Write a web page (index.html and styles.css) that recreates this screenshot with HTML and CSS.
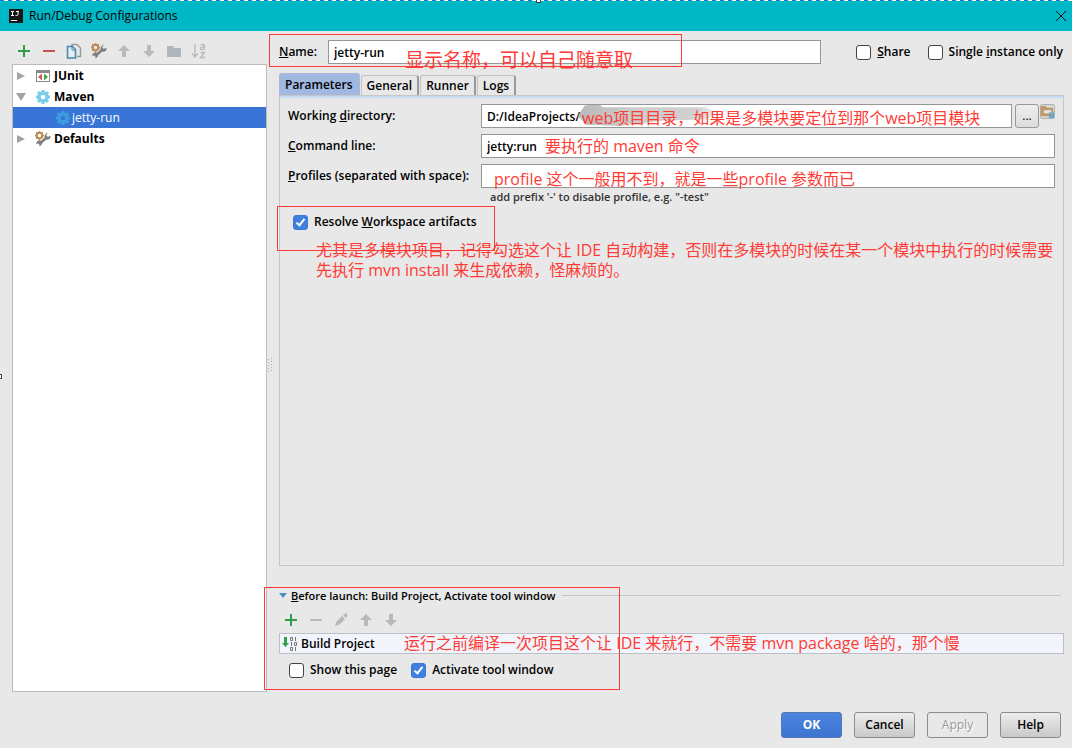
FILE: index.html
```html
<!DOCTYPE html>
<html lang="zh-CN">
<head>
<meta charset="utf-8">
<title>Run/Debug Configurations</title>
<link rel="stylesheet" href="styles.css">
</head>
<body>
<svg class="defs" aria-hidden="true">
  <symbol id="plus" viewBox="0 0 16 16"><path d="M8 2v12M2 8h12" stroke="#2d9e47" stroke-width="2" fill="none"/></symbol>
  <symbol id="up" viewBox="0 0 16 16"><path d="M8 2l6 6h-4v6H6V8H2z" fill="currentColor"/></symbol>
  <symbol id="down" viewBox="0 0 16 16"><path d="M8 14l6-6h-4V2H6v6H2z" fill="currentColor"/></symbol>
  <symbol id="wrench" viewBox="0 0 16 16">
    <circle cx="4.500" cy="4.500" r="2.800" fill="none" stroke="#bf8a56" stroke-width="2"/>
    <path d="M4.500 0v1.500M4.500 7.500V9M0 4.500h1.500M7.500 4.500H9M1.200 1.200l1 1M7.800 1.200l-1 1M1.200 7.800l1-1" stroke="#bf8a56" stroke-width="1.500"/>
    <path d="M5 12.500l6.500-6" stroke="#808080" stroke-width="2.600"/>
    <path d="M12.800 1.500l-1.600 2.600 1.200 1.600 3.200-.7c.3 2.400-1.600 4.200-3.800 3.800-2-.4-3-2.600-2-4.600.6-1.400 1.700-2.400 3-2.700z" fill="#808080"/>
    <path d="M5.500 9.500c2 1 2.300 4.500-1 6l-.2-2.200-1.500-.8-1.500.8C1 11 3 8.800 5.500 9.500z" fill="#808080"/>
  </symbol>
  <symbol id="gear" viewBox="0 0 16 16">
    <circle cx="8" cy="8" r="4" fill="none" stroke="currentColor" stroke-width="3.500"/>
    <path d="M8 1v3M8 12v3M1 8h3M12 8h3M3 3l2 2M11 11l2 2M3 13l2-2M11 5l2-2" stroke="currentColor" stroke-width="3"/>
  </symbol>
</svg>
<div class="window">
  <header class="titlebar">
    <svg class="logo" viewBox="0 0 14 14" aria-hidden="true"><rect width="14" height="14" fill="#161616"/><path d="M2 2.500h3M3.500 2.500v4M2 6.500h3M7 2.500h3M9 2.500v3q0 1-1.500 1H6.500" stroke="#fff" fill="none"/><path d="M2 11.500h6" stroke="#fff"/></svg>
    <h1>Run/Debug Configurations</h1>
    <button class="close" type="button" aria-label="Close"><svg viewBox="0 0 10 10"><path d="M0 0l10 10M10 0L0 10" stroke="#111" fill="none"/></svg></button>
    <span class="handle handle-top"></span>
  </header>

  <main class="main">
    <aside class="sidebar">
      <div class="toolbar">
        <button type="button" aria-label="Add"><svg><use href="#plus"/></svg></button>
        <button type="button" aria-label="Remove"><svg viewBox="0 0 16 16"><path d="M2 8h12" stroke="#c75450" stroke-width="2"/></svg></button>
        <button type="button" aria-label="Copy"><svg viewBox="0 0 16 16"><path d="M6 3V1.500h5L14.500 5v8.500H11" fill="#e8e8e8" stroke="#9a9a9a" stroke-width="1.500"/><path d="M1.500 3.500h5L9.500 6.500V15h-8z" fill="#e4eef5" stroke="#4a88ad" stroke-width="1.600"/><path d="M6 4v3h3.500" stroke="#4a88ad" fill="none"/></svg></button>
        <button type="button" aria-label="Edit defaults"><svg><use href="#wrench"/></svg></button>
        <button type="button" aria-label="Move up" disabled><svg><use href="#up"/></svg></button>
        <button type="button" aria-label="Move down" disabled><svg><use href="#down"/></svg></button>
        <button type="button" aria-label="Create folder" disabled><svg viewBox="0 0 16 16"><path d="M1 3h6l1.500 2H15v9H1z" fill="#b1b6bc"/></svg></button>
        <button type="button" aria-label="Sort" disabled><svg viewBox="0 0 16 16"><path d="M4 1v13M1 10.500l3 3.500 3-3.500M9.500 2q4-1.500 4 1V7M13.500 4q-4-.5-4 1.500t4 .5M9.500 9.500h4l-4 5h4.500" fill="none" stroke="#b8b8b8" stroke-width="1.300"/></svg></button>
      </div>
      <ul class="tree">
        <li><svg class="arrow" viewBox="0 0 10 10"><path d="M1 1l8 4-8 4z"/></svg><svg class="icon" viewBox="0 0 16 16"><rect x="1.500" y="2.500" width="13" height="11" fill="#fff" stroke="#8a8a8a"/><path d="M1 2h14v3H1z" fill="#8a8a8a"/><path d="M7 5.500v7L3 9z" fill="#d05c56"/><path d="M9 5.500v7L13 9z" fill="#3fa54a"/></svg>JUnit</li>
        <li><svg class="arrow" viewBox="0 0 10 10"><path d="M0 1h10L5 9z"/></svg><svg class="icon gear"><use href="#gear"/></svg>Maven</li>
        <li class="selected"><svg class="icon gear"><use href="#gear"/></svg>jetty-run</li>
        <li><svg class="arrow" viewBox="0 0 10 10"><path d="M1 1l8 4-8 4z"/></svg><svg class="icon"><use href="#wrench"/></svg>Defaults</li>
      </ul>
    </aside>

    <div class="splitter"><svg viewBox="0 0 6 16" aria-hidden="true"><path d="M1.500 1v15M4.500 0v15" stroke="#aaa" stroke-dasharray="1 2"/></svg></div>

    <section class="content">
      <div class="name-row">
        <label for="name"><u>N</u>ame:</label>
        <input class="field" id="name" type="text" value="jetty-run">
        <div class="options">
          <label class="check"><input type="checkbox"><span><u>S</u>hare</span></label>
          <label class="check"><input type="checkbox"><span>Single <u>i</u>nstance only</span></label>
        </div>
        <div class="frame frame-name"></div>
        <p class="note note-name">显示名称，可以自己随意取</p>
      </div>

      <nav class="tabs" role="tablist">
        <button type="button" role="tab" aria-selected="true">Parameters</button>
        <button type="button" role="tab">General</button>
        <button type="button" role="tab">Runner</button>
        <button type="button" role="tab">Logs</button>
      </nav>

      <div class="panel">
        <div class="form-row">
          <label for="dir">Working <u>d</u>irectory:</label>
          <div class="control">
            <input class="field" id="dir" type="text" value="D:/IdeaProjects/">
            <span class="smudge"></span>
            <button class="browse" type="button" aria-label="Browse">...</button>
            <button class="module" type="button" aria-label="Choose module"><svg viewBox="0 0 16 16"><rect x=".5" y=".5" width="15" height="15" rx="2" fill="#d9d9d9" stroke="#aaa"/><path d="M1 2h5l1.500 2H14v9H1z" fill="#c19a63"/><path d="M4 6.500h8V10H4z" fill="#e3e3e3"/><path d="M9.500 9H15v6H9.500z" fill="#6fa8cc"/></svg></button>
            <p class="note note-dir">web项目目录，如果是多模块要定位到那个web项目模块</p>
          </div>
        </div>
        <div class="form-row">
          <label for="cmd"><u>C</u>ommand line:</label>
          <div class="control">
            <input class="field" id="cmd" type="text" value="jetty:run">
            <p class="note note-cmd">要执行的 maven 命令</p>
          </div>
        </div>
        <div class="form-row">
          <label for="profiles"><u>P</u>rofiles (separated with space):</label>
          <div class="control">
            <input class="field" id="profiles" type="text">
            <p class="note note-profile">profile 这个一般用不到，就是一些profile 参数而已</p>
          </div>
        </div>
        <p class="hint">add prefix '-' to disable profile, e.g. "-test"</p>
        <div class="resolve">
          <label class="check"><input type="checkbox" checked><span>Resolve <u>W</u>orkspace artifacts</span></label>
          <div class="frame frame-resolve"></div>
          <p class="note note-resolve">尤其是多模块项目，记得勾选这个让 IDE 自动构建，否则在多模块的时候在某一个模块中执行的时候需要<br>先执行 mvn install 来生成依赖，怪麻烦的。</p>
        </div>
      </div>

      <section class="launch">
        <div class="launch-title"><svg viewBox="0 0 8 5" aria-hidden="true"><path d="M0 0h8L4 5z" fill="#4393bd"/></svg><h2><u>B</u>efore launch: Build Project, Activate tool window</h2></div>
        <div class="toolbar">
          <button type="button" aria-label="Add task"><svg><use href="#plus"/></svg></button>
          <button type="button" aria-label="Remove task" disabled><svg viewBox="0 0 16 16"><path d="M2 8h12" stroke="currentColor" stroke-width="2"/></svg></button>
          <button type="button" aria-label="Edit task" disabled><svg viewBox="0 0 16 16"><path d="M2 14l1.500-4.500L9 4l3 3-5.500 5.500zM10 3l1.500-1.300q2-.8 2.700.3t-.2 2.500L13 6z" fill="currentColor"/></svg></button>
          <button type="button" aria-label="Task up" disabled><svg><use href="#up"/></svg></button>
          <button type="button" aria-label="Task down" disabled><svg><use href="#down"/></svg></button>
        </div>
        <div class="task">
          <svg viewBox="0 0 16 16" aria-hidden="true"><path d="M2 1h3v6h2L3.500 11 0 7h2z" fill="#33a04a"/><path d="M8.500 1.500h2v3h-2zM13.500 1v4M9.500 6v4M12.500 6.500h2v3h-2zM8.500 11.500h2v3h-2zM13.500 11v4" fill="none" stroke="#777"/></svg>
          <span>Build Project</span>
          <p class="note note-task">运行之前编译一次项目这个让 IDE 来就行，不需要 mvn package 啥的，那个慢</p>
        </div>
        <div class="launch-options">
          <label class="check"><input type="checkbox"><span>Show this page</span></label>
          <label class="check"><input type="checkbox" checked><span>Activate tool window</span></label>
        </div>
        <div class="frame frame-launch"></div>
      </section>
    </section>
  </main>

  <footer class="actions">
    <button class="primary" type="button">OK</button>
    <button type="button">Cancel</button>
    <button type="button" disabled>Apply</button>
    <button type="button">Help</button>
  </footer>
  <span class="handle handle-left"></span>
</div>
</body>
</html>
```
FILE: styles.css
```css
*, *::before, *::after { box-sizing: border-box; }
body {
  margin: 0;
  background: #e8e8e8;
  color: #000;
  font: 600 12px/16px "Open Sans", "Noto Sans CJK SC", sans-serif;
}
h1, h2, p, ul { margin: 0; padding: 0; font: inherit; }
button, input { font: inherit; color: inherit; }
button { padding: 0; }
svg { display: block; flex: none; }
u { text-underline-offset: 1px; }
.defs { position: absolute; width: 0; height: 0; }

.window {
  position: relative;
  display: flex;
  flex-direction: column;
  min-height: 100vh;
  overflow: hidden;
}

/* Title bar */
.titlebar {
  position: relative;
  display: flex;
  align-items: center;
  gap: 6px;
  height: 31px;
  padding: 0 6px 0 9px;
  background: repeating-linear-gradient(90deg, #0a78d0 0 4px, #fff 4px 8px) top / 100% 1px no-repeat, #00b7c6;
}
.titlebar h1 { flex: 1; font-weight: 400; }
.logo { width: 14px; height: 14px; }
.close { border: 0; background: none; }
.close svg { width: 10px; height: 10px; }
.handle { position: absolute; width: 5px; height: 5px; border: 1px solid #444; background: #fff; }
.handle-top { top: -2px; left: 50%; }
.handle-left { top: 50%; left: -3px; }

.main { flex: 1; display: flex; padding: 9px 8px 0 12px; }

/* Configuration tree */
.sidebar { width: 255px; display: flex; flex-direction: column; }
.toolbar { display: flex; gap: 9px; padding: 3px 4px 5px; color: #b9b9b9; }
.toolbar button { border: 0; background: none; color: inherit; }
.toolbar svg { width: 16px; height: 16px; }
.tree { flex: 1; list-style: none; border: 1px solid #bcbcbc; background: #fff; font-weight: 700; }
.tree li { display: flex; align-items: center; height: 21px; padding-left: 3px; }
.arrow { width: 10px; height: 10px; margin-right: 9px; fill: #a3a3a3; }
.icon { width: 16px; height: 16px; margin-right: 3px; }
.gear { color: #7ccdec; }
.tree .selected { padding-left: 42px; background: #3875d7; color: #fff; font-weight: 400; }
.selected .gear { color: #3d9bdf; margin-right: 1px; }

.splitter { display: flex; align-items: center; width: 12px; }
.splitter svg { width: 6px; height: 16px; }

/* Settings */
.content { flex: 1; min-width: 0; display: flex; flex-direction: column; }
.field {
  flex: 1;
  min-width: 0;
  height: 24px;
  padding: 0 5px;
  border: 1px solid #969696;
  background: #fff;
}
.name-row { position: relative; display: flex; align-items: center; padding-right: 1px; }
.name-row > label { width: 49px; }
.options { display: flex; gap: 17px; margin-left: 35px; }
.check { display: flex; align-items: center; gap: 6px; }
.check input {
  appearance: none;
  position: relative;
  width: 15px;
  height: 15px;
  margin: 0;
  border: 1px solid #444;
  border-radius: 3px;
  background: #fff;
}
.check input:checked { border-color: #3a79d8; background: #3f80dd; }
.check input:checked::after {
  content: "";
  position: absolute;
  top: 1px;
  left: 4px;
  width: 5px;
  height: 9px;
  border: solid #fff;
  border-width: 0 2px 2px 0;
  transform: rotate(38deg);
}

.tabs { display: flex; align-items: flex-end; gap: 1px; margin-top: 9px; }
.tabs button {
  height: 20px;
  padding: 0 5px;
  border: 1px solid #c2c2c2;
  border-width: 1px 2px 0 1px;
  border-right-color: #999;
  border-radius: 3px 3px 0 0;
  background: #e8e8e8;
}
.tabs [aria-selected="true"] { height: 22px; background: #a1b8e0; border-color: #a9b9d6; }

.panel { flex: 1; border: 1px solid #c6c6c6; box-shadow: inset 0 2px #c8dbf2; padding: 8px 8px 0; }
.form-row { display: flex; align-items: center; margin-bottom: 6px; }
.form-row > label { width: 193px; }
.control { position: relative; flex: 1; display: flex; align-items: flex-start; }
.browse {
  width: 24px;
  height: 24px;
  margin-left: 3px;
  border: 1px solid #999;
  border-radius: 3px;
  background: linear-gradient(#eee, #ddd);
  font-weight: 400;
}
.module { margin-left: 1px; border: 0; background: none; }
.module svg { width: 15px; height: 15px; }
.smudge { position: absolute; top: 1px; left: 97px; width: 138px; height: 22px; border-radius: 12px; background: linear-gradient(90deg, #b9b9b9, #ccc 40%, #d0d0d0 85%, #eee); clip-path: polygon(0 50%, 5% 0, 16% 0, 18% 10%, 92% 10%, 100% 30%, 94% 65%, 60% 72%, 30% 95%, 6% 90%); }
.hint { margin: -4px 0 0 202px; font-size: 11px; line-height: 14px; color: #333; }
.resolve { position: relative; margin-top: 10px; padding-left: 5px; }

/* Before launch */
.launch { position: relative; margin-top: 21px; padding-bottom: 14px; }
.launch-title { display: flex; align-items: center; gap: 4px; padding-right: 3px; font-size: 11px; line-height: 17px; }
.launch-title svg { width: 8px; height: 5px; }
.launch-title::after { content: ""; flex: 1; height: 1px; margin-left: 2px; background: #c6c6c6; }
.launch .toolbar { padding: 8px 4px 5px; }
.task { position: relative; display: flex; align-items: center; gap: 3px; height: 21px; padding-left: 2px; border: 1px solid #bcbfc5; background: #f1f5fb; }
.task svg { width: 16px; height: 16px; }
.launch-options { display: flex; gap: 14px; padding: 8px 10px 0; }

.actions { display: flex; justify-content: flex-end; gap: 12px; padding: 20px 11px 10px; }
.actions button {
  width: 61px;
  height: 26px;
  border: 1px solid #8c8c8c;
  border-radius: 3px;
  background: linear-gradient(#ececec, #c9c9c9);
}
.actions .primary { border-color: #5579b3; background: linear-gradient(#4a85e0, #3d74cf); color: #fff; font-weight: 700; }
.actions button:disabled { background: #e8e8e8; color: #999; font-weight: 400; text-shadow: 1px 1px #fff; }

/* Red review marks laid over the dialog */
.note { position: absolute; color: #ff3b36; font: 400 16px/20px "Open Sans", "Noto Sans CJK SC", sans-serif; white-space: nowrap; }
.frame { position: absolute; border: 1px solid #ff3b36; pointer-events: none; }
.frame-name { top: -6px; left: -10px; width: 413px; height: 33px; }
.note-name { top: 10px; left: 126px; font-size: 19px; }
.note-dir { top: 4px; left: 101px; }
.note-cmd { top: 2px; left: 64px; }
.note-profile { top: 5px; left: 13px; }
.frame-resolve { top: -8px; left: -11px; width: 218px; height: 45px; }
.note-resolve { top: 26px; left: 28px; }
.note-task { top: -1px; left: 124px; }
.frame-launch { top: 0; left: -15px; width: 356px; height: 103px; }
```
